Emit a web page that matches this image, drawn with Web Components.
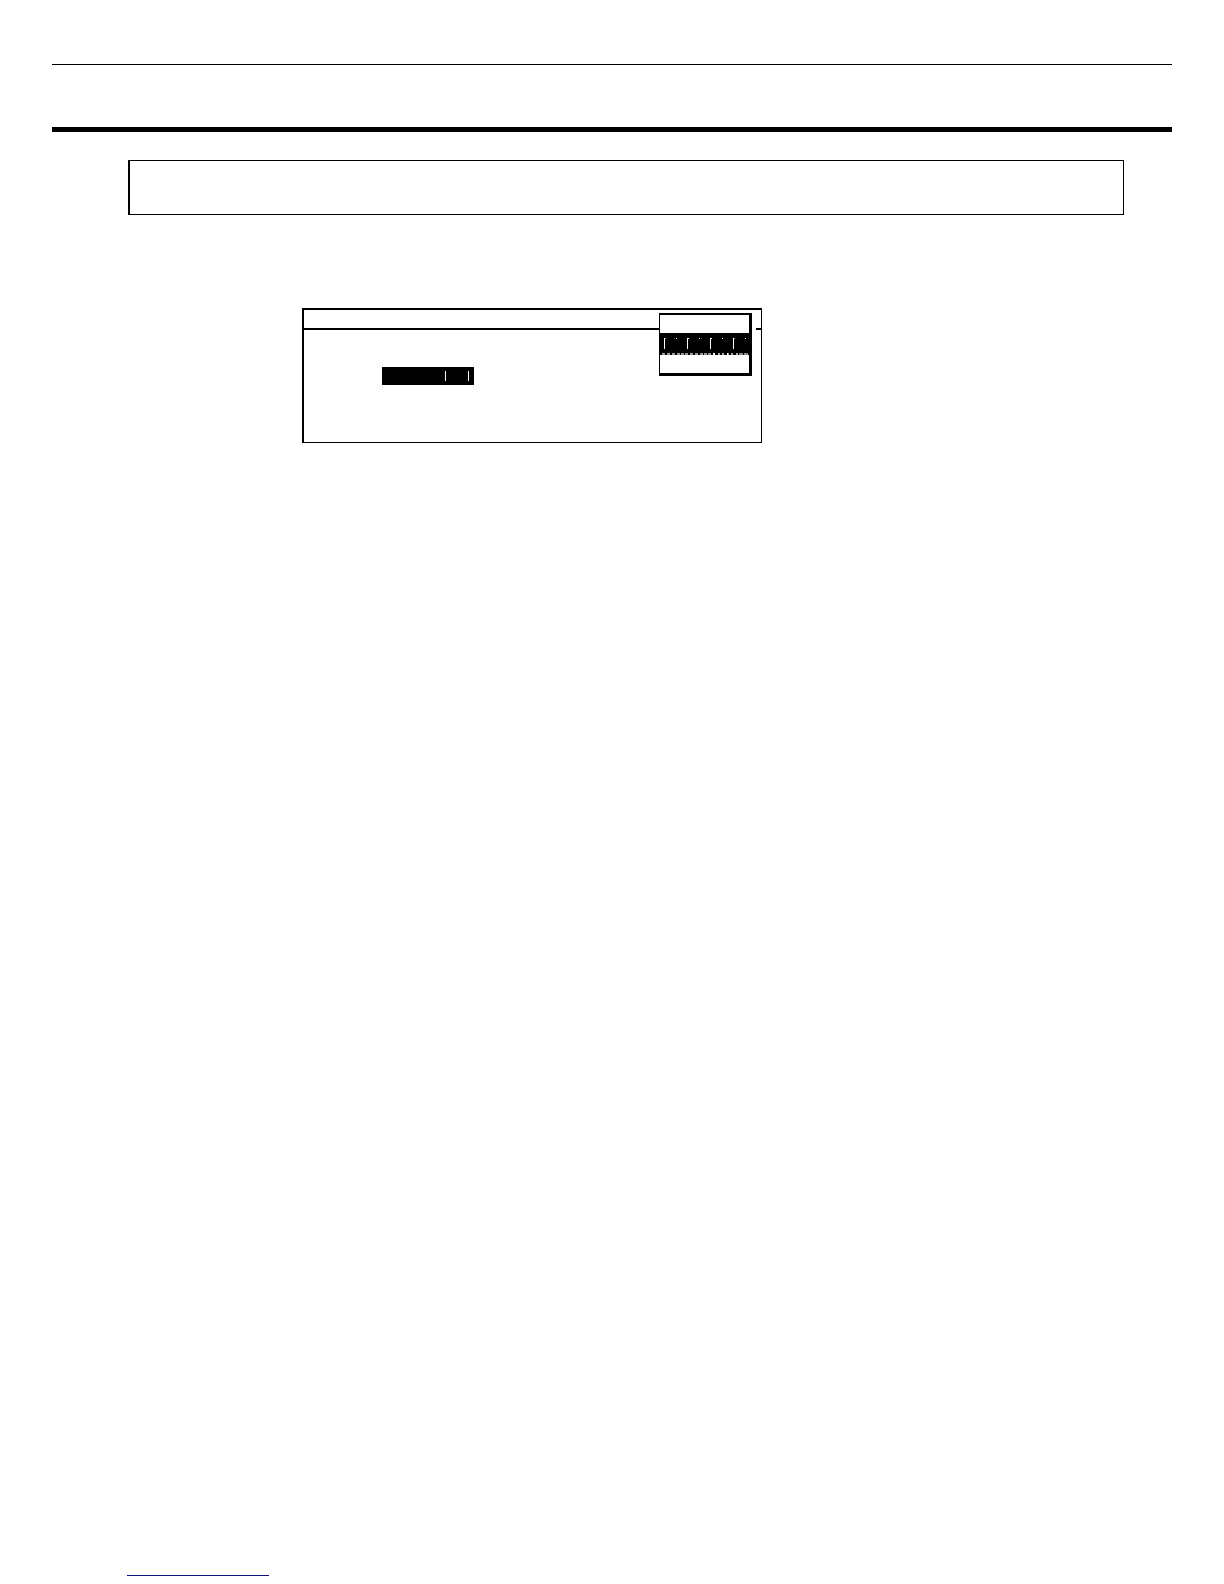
<!DOCTYPE html>
<html lang="en">
<head>
<meta charset="utf-8">
<meta name="viewport" content="width=device-width, initial-scale=1">
<style>
  body {
    margin: 0;
    background-color: #fff;
    font-family: "Liberation Sans", sans-serif;
  }
</style>
</head>
<body>
<manual-page>
  <page-header></page-header>
  <notice-box></notice-box>
  <lcd-screen>
    <selected-field></selected-field>
    <popup-menu slot="menu"></popup-menu>
  </lcd-screen>
  <page-footer></page-footer>
</manual-page>

<script>
const define = (name, html) => {
  const template = document.createElement("template");
  template.innerHTML = html;

  window.customElements.define(name, class extends HTMLElement {
    constructor() {
      super();
      this.attachShadow({ mode: "open" });
      this.shadowRoot.appendChild(template.content.cloneNode(true));
    }
  });
};

define("manual-page", `
  <style>
    :host {
      display: flex;
      flex-direction: column;
      box-sizing: border-box;
      min-height: 100vh;
      padding: 64px 52px 8px;
    }
  </style>
  <slot></slot>
`);

define("page-header", `
  <style>
    :host { display: block; }

    header {
      min-height: 62px;
      border-top: 1px solid #000;
      border-bottom: 5px solid #000;
    }
  </style>
  <header></header>
`);

define("notice-box", `
  <style>
    :host {
      display: block;
      margin: 28px 48px 0 76px;
    }

    section {
      min-height: 53px;
      border: 1px solid #000;
      border-left-width: 2px;
    }
  </style>
  <section></section>
`);

define("lcd-screen", `
  <style>
    :host {
      display: block;
      max-width: 460px;
      margin: 93px 0 0 250px;
    }

    .frame {
      position: relative;
      border: 1px solid #000;
      border-top-width: 2px;
      border-left-width: 2px;
    }

    .title {
      min-height: 18px;
      border-bottom: 2px solid #000;
    }

    .body {
      min-height: 75px;
      padding: 37px 78px 0;
    }

    /* the menu drops over the title rule */
    .menu {
      position: absolute;
      top: 3px;
      right: 9px;
    }
  </style>
  <div class="frame">
    <div class="title"></div>
    <div class="body"><slot></slot></div>
    <div class="menu"><slot name="menu"></slot></div>
  </div>
`);

define("selected-field", `
  <style>
    :host {
      display: block;
      width: 92px;
      background-color: #000;
    }

    svg { display: block; }
  </style>
  <svg width="92" height="18" shape-rendering="crispEdges" aria-hidden="true">
    <path fill="#fff" d="M63 4h1v10h-1zM86 4h1v10h-1z"/>
  </svg>
`);

define("popup-menu", `
  <style>
    :host { display: block; }

    ul {
      margin: 0;
      padding: 0;
      list-style: none;
      background-color: #fff;
      border: solid #000;
      border-width: 2px 3px 3px 1px;
      box-shadow: 4px 0 0 #fff;
    }

    li { min-height: 18px; }
    .selected { background-color: #000; }
    svg { display: block; }
  </style>
  <ul>
    <li></li>
    <li class="selected">
      <svg width="89" height="22" shape-rendering="crispEdges" aria-hidden="true">
        <path fill="#fff" d="M4 5h1v11h-1zM27 5h2v1h-1v10h-1zM50 5h2v1h-1v10h-1zM73 5h1v11h-1z"/>
        <path fill="#888" d="M5 5h1v1h-1zM74 5h1v1h-1z"/>
        <path fill="#fff" d="M16 5h1v1h-1zM39 5h1v1h-1zM62 5h1v1h-1zM85 5h1v1h-1z"/>
        <g fill="none" stroke-width="2">
          <path stroke="#999" stroke-dasharray="3 2 3 2 3 2 3 1 3 1" d="M2 21h50"/>
          <path stroke="#aaa" stroke-dasharray="2 3 2 2" d="M53 21h26"/>
          <path stroke="#fff" stroke-dasharray="2 12" d="M53 21h15"/>
          <path stroke="#888" stroke-dasharray="4 1" d="M79 21h9"/>
        </g>
      </svg>
    </li>
    <li></li>
  </ul>
`);

define("page-footer", `
  <style>
    :host {
      display: block;
      margin: auto 0 0 75px;
    }

    a {
      display: block;
      width: 142px;
      min-height: 16px;
      border-bottom: 1px solid #101080;
    }
  </style>
  <footer><a href="#"></a></footer>
`);
</script>
</body>
</html>
